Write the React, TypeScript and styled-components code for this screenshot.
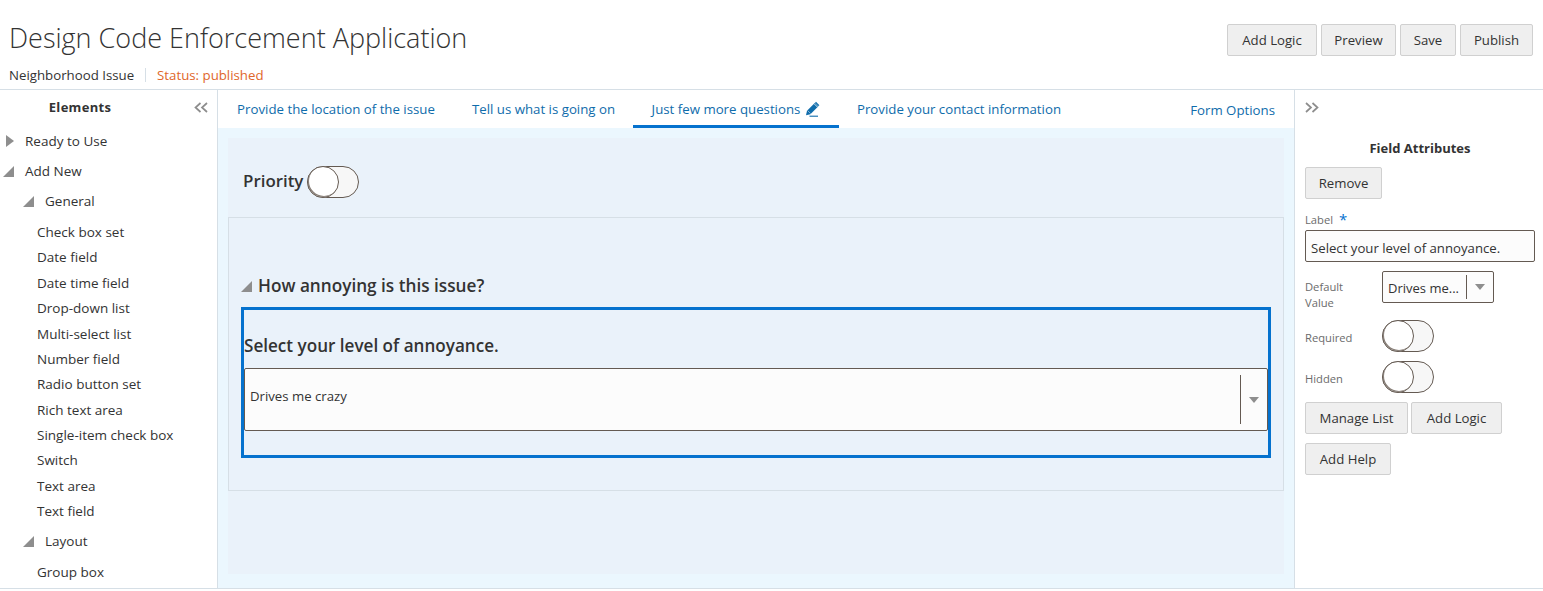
import React from "react";
import styled, { createGlobalStyle } from "styled-components";

const Global = createGlobalStyle`
  html, body { margin: 0; padding: 0; background: #fff; }
  body { font-family: "Open Sans", "Noto Sans", "Liberation Sans", sans-serif; color: #333; overflow: hidden; }
  * { box-sizing: border-box; }
`;

const Page = styled.div`
  width: 1543px;
  height: 591px;
  display: flex;
  flex-direction: column;
  overflow: hidden;
`;

const Header = styled.header`
  height: 90px;
  flex: none;
  display: flex;
  justify-content: space-between;
  border-bottom: 1px solid #d6dfe6;
  padding: 0 10px 0 9px;
`;

const TitleBlock = styled.div`
  display: flex;
  flex-direction: column;
  padding-top: 19px;
`;

const Title = styled.h1`
  margin: 0;
  font-weight: 300;
  font-size: 27px;
  line-height: 38px;
  color: #333;
`;

const Meta = styled.div`
  display: flex;
  align-items: center;
  margin-top: 9px;
  font-size: 13.25px;
  line-height: 18px;
`;

const MetaName = styled.span`
  color: #333;
  padding-right: 11px;
  border-right: 1px solid #d6dfe6;
  line-height: 14px;
`;

const MetaStatus = styled.span`
  color: #e0662a;
  padding-left: 11px;
`;

const HeaderActions = styled.div`
  display: flex;
  gap: 4px;
  padding-top: 24px;
`;

const Btn = styled.button<{ $w: number }>`
  width: ${(p) => p.$w}px;
  height: 32px;
  padding: 0;
  background: #efefef;
  border: 1px solid #d0d0d0;
  border-radius: 2px;
  font-family: inherit;
  font-size: 13.2px;
  color: #333;
`;

const Body = styled.div`
  height: 499px;
  flex: none;
  display: grid;
  grid-template-columns: 218px 1077px 1fr;
  border-bottom: 1px solid #d6dfe6;
`;

const Sidebar = styled.aside`
  border-right: 1px solid #d6dfe6;
  overflow: hidden;
  position: relative;
  font-size: 13.5px;
`;

const SideTitle = styled.div`
  height: 36px;
  display: flex;
  align-items: center;
  justify-content: center;
  padding: 0 57px 3px 0;
  font-size: 13px;
  letter-spacing: 0.3px;
  font-weight: 700;
  color: #333;
`;

const Collapse = styled.span`
  position: absolute;
  right: 9px;
  top: 12px;
  line-height: 0;
`;

const TreeRow = styled.div<{ $indent: number; $h: number }>`
  height: ${(p) => p.$h}px;
  display: flex;
  align-items: center;
  padding-left: ${(p) => p.$indent}px;
  color: #333;
`;

const Twisty = styled.svg`
  flex: none;
  display: block;
`;

const TreeLabel = styled.span<{ $gap: number }>`
  margin-left: ${(p) => p.$gap}px;
`;

const LeafList = styled.div`
  padding-top: 3.4px;
`;

const Leaf = styled.div`
  height: 25.36px;
  display: flex;
  align-items: center;
  padding-left: 37px;
  color: #333;
`;

const Main = styled.main`
  display: flex;
  flex-direction: column;
  background: #ebf7fe;
  border-right: 1px solid #d6dfe6;
`;

const Tabs = styled.nav`
  height: 38px;
  flex: none;
  background: #fff;
  display: flex;
  font-size: 13.25px;
  color: #0f6cab;
`;

const Tab = styled.div<{ $active?: boolean; $w: number }>`
  width: ${(p) => p.$w}px;
  display: flex;
  align-items: center;
  justify-content: center;
  gap: 5px;
  padding-top: 3px;
  border-bottom: 3px solid ${(p) => (p.$active ? "#0572ce" : "transparent")};
`;

const TabSpacer = styled.div`
  flex: 1;
`;

const FormOptions = styled.div`
  display: flex;
  align-items: center;
  padding: 2px 19px 0 0;
`;

const Canvas = styled.div`
  flex: 1;
  margin: 10px 10px 14px 10px;
  background: #eaf2fa;
  display: flex;
  flex-direction: column;
`;

const PriorityRow = styled.div`
  height: 79px;
  flex: none;
  display: flex;
  align-items: center;
  padding: 5px 0 0 15px;
  gap: 4px;
  font-size: 16.9px;
  font-weight: 600;
  color: #333;
`;

const Toggle = styled.span<{ $drop?: number }>`
  position: relative;
  display: block;
  width: 52px;
  height: 32px;
  margin-top: ${(p) => p.$drop ?? 0}px;
  border: 1px solid #645a52;
  border-radius: 16px;
  background: #f7f7f7;
  flex: none;
`;

const Knob = styled.span`
  position: absolute;
  left: -1px;
  top: -1px;
  width: 32px;
  height: 32px;
  border-radius: 50%;
  border: 1px solid #645a52;
  box-shadow: inset 1px -1px 0 #8a817a;
  background: #fff;
`;

const GroupBox = styled.section`
  height: 274px;
  flex: none;
  border: 1px solid #d6dfe6;
  padding: 55px 12px 0 12px;
`;

const GroupHead = styled.div`
  display: flex;
  align-items: center;
  gap: 6px;
  height: 26px;
  font-size: 17.2px;
  font-weight: 600;
  color: #333;
`;

const GroupTitle = styled.span`
  margin-top: -2px;
`;

const Selected = styled.div`
  margin-top: 8px;
  height: 151px;
  border: 3px solid #0572ce;
  display: flex;
  flex-direction: column;
`;

const FieldLabel = styled.div`
  height: 58px;
  flex: none;
  display: flex;
  align-items: flex-end;
  padding: 0 0 11px 0;
  font-size: 17.1px;
  font-weight: 600;
  color: #333;
  line-height: 22px;
`;

const BigSelect = styled.div`
  height: 63px;
  background: #fcfcfc;
  border: 1px solid #645a52;
  border-radius: 2px;
  display: flex;
  align-items: flex-start;
  padding: 6px 0 0 5px;
  font-size: 13.2px;
  color: #333;
`;

const BigValue = styled.span`
  flex: 1;
  padding-top: 6px;
  line-height: 30px;
  height: 36px;
`;

const Divider = styled.span<{ $h: number }>`
  width: 1px;
  height: ${(p) => p.$h}px;
  background: #645a52;
  flex: none;
`;

const CaretBox = styled.span`
  width: 26px;
  height: 50px;
  flex: none;
  display: flex;
  align-items: center;
  justify-content: center;
`;

const Panel = styled.aside`
  padding: 0 8px 0 10px;
  display: flex;
  flex-direction: column;
  font-size: 13px;
  position: relative;
`;

const PanelTop = styled.div`
  height: 46px;
  flex: none;
  padding-top: 12px;
  line-height: 0;
`;

const PanelTitle = styled.div`
  height: 24px;
  flex: none;
  display: flex;
  align-items: center;
  justify-content: center;
  font-size: 13px;
  font-weight: 700;
  margin-bottom: 7px;
`;

const FieldName = styled.div`
  font-size: 11.2px;
  color: #6b6b6b;
  line-height: 16px;
  display: flex;
  gap: 6px;
  margin-top: 13px;
  height: 14px;
`;

const Star = styled.span`
  color: #0572ce;
  font-size: 15px;
  line-height: 14px;
`;

const TextInput = styled.div`
  width: 230px;
  height: 32px;
  margin: 4px 0 9px;
  background: #fcfcfc;
  border: 1px solid #645a52;
  border-radius: 2px;
  display: flex;
  align-items: center;
  padding: 3px 0 0 5px;
  font-size: 13.2px;
  color: #333;
  white-space: nowrap;
`;

const AttrRow = styled.div<{ $h: number }>`
  height: ${(p) => p.$h}px;
  flex: none;
  display: grid;
  grid-template-columns: 77px 1fr;
  align-items: start;
`;

const AttrName = styled.div<{ $pt: number }>`
  font-size: 11.2px;
  color: #6b6b6b;
  line-height: 16px;
  padding-top: ${(p) => p.$pt}px;
`;

const MiniSelect = styled.div`
  width: 112px;
  height: 32px;
  background: #fcfcfc;
  border: 1px solid #645a52;
  border-radius: 2px;
  display: flex;
  align-items: center;
  padding-left: 5px;
  font-size: 13px;
  color: #333;
`;

const MiniValue = styled.span`
  width: 78px;
  padding-top: 2px;
  white-space: nowrap;
`;

const MiniCaret = styled.span`
  flex: 1;
  display: flex;
  justify-content: center;
`;

const BtnRow = styled.div`
  display: flex;
  gap: 3px;
  margin-bottom: 9px;
`;

const Caret = () => (
  <svg width="10" height="6" viewBox="0 0 10 6"><path d="M0 0h10L5 6z" fill="#8e8e8e" /></svg>
);

const Down = () => (
  <Twisty width="11" height="11" viewBox="0 0 11 11"><path d="M11 0v11H0z" fill="#8e8e8e" /></Twisty>
);

const Right = () => (
  <Twisty width="8" height="12" viewBox="0 0 8 12"><path d="M0 0l8 6-8 6z" fill="#8e8e8e" /></Twisty>
);

const Chevrons = ({ flip }: { flip?: boolean }) => (
  <svg width="14" height="11" viewBox="0 0 14 11" style={flip ? { transform: "scaleX(-1)" } : undefined}>
    <path d="M6.5 1L1.5 5.5l5 4.5M13 1L8 5.5l5 4.5" fill="none" stroke="#8d8d8d" strokeWidth="1.7" />
  </svg>
);

const PencilIcon = () => (
  <svg width="15" height="16" viewBox="0 0 15 16">
    <path d="M1 14.2l1-4.4 8-8 3.4 3.4-8 8z" fill="#0f6cab" />
    <path d="M11 0.8l3.4 3.4-0.9 0.9-3.4-3.4z" fill="#0f6cab" />
    <path d="M9.2 2.8l3.2 3.2" stroke="#fff" strokeWidth="0.8" />
    <path d="M2.6 9.6l3 3" stroke="#cfe3f1" strokeWidth="0.6" />
    <path d="M4.5 15.2h8.5" stroke="#0f6cab" strokeWidth="1.1" />
  </svg>
);

const Switch = ({ drop }: { drop?: number }) => (
  <Toggle $drop={drop}>
    <Knob />
  </Toggle>
);

const leaves1 = [
  "Check box set",
  "Date field",
  "Date time field",
  "Drop-down list",
  "Multi-select list",
  "Number field",
  "Radio button set",
  "Rich text area",
  "Single-item check box",
  "Switch",
  "Text area",
  "Text field",
];

export default function App() {
  return (
    <Page>
      <Global />
      <Header>
        <TitleBlock>
          <Title>Design Code Enforcement Application</Title>
          <Meta>
            <MetaName>Neighborhood Issue</MetaName>
            <MetaStatus>Status: published</MetaStatus>
          </Meta>
        </TitleBlock>
        <HeaderActions>
          <Btn $w={90}>Add Logic</Btn>
          <Btn $w={75}>Preview</Btn>
          <Btn $w={56}>Save</Btn>
          <Btn $w={73}>Publish</Btn>
        </HeaderActions>
      </Header>
      <Body>
        <Sidebar>
          <SideTitle>Elements</SideTitle>
          <Collapse>
            <Chevrons />
          </Collapse>
          <TreeRow $indent={6} $h={30}>
            <Right />
            <TreeLabel $gap={11}>Ready to Use</TreeLabel>
          </TreeRow>
          <TreeRow $indent={3} $h={30}>
            <Down />
            <TreeLabel $gap={11}>Add New</TreeLabel>
          </TreeRow>
          <TreeRow $indent={23} $h={30}>
            <Down />
            <TreeLabel $gap={11}>General</TreeLabel>
          </TreeRow>
          <LeafList>
            {leaves1.map((l) => (
              <Leaf key={l}>{l}</Leaf>
            ))}
          </LeafList>
          <TreeRow $indent={23} $h={35.5}>
            <Down />
            <TreeLabel $gap={11}>Layout</TreeLabel>
          </TreeRow>
          <Leaf>Group box</Leaf>
        </Sidebar>
        <Main>
          <Tabs>
            <Tab $w={236}>Provide the location of the issue</Tab>
            <Tab $w={179}>Tell us what is going on</Tab>
            <Tab $active $w={206}>
              Just few more questions
              <PencilIcon />
            </Tab>
            <Tab $w={240}>Provide your contact information</Tab>
            <TabSpacer />
            <FormOptions>Form Options</FormOptions>
          </Tabs>
          <Canvas>
            <PriorityRow>
              Priority
              <Switch drop={4} />
            </PriorityRow>
            <GroupBox>
              <GroupHead>
                <Down />
                <GroupTitle>How annoying is this issue?</GroupTitle>
              </GroupHead>
              <Selected>
                <FieldLabel>Select your level of annoyance.</FieldLabel>
                <BigSelect>
                  <BigValue>Drives me crazy</BigValue>
                  <Divider $h={49} />
                  <CaretBox>
                    <Caret />
                  </CaretBox>
                </BigSelect>
              </Selected>
            </GroupBox>
          </Canvas>
        </Main>
        <Panel>
          <PanelTop>
            <Chevrons flip />
          </PanelTop>
          <PanelTitle>Field Attributes</PanelTitle>
          <div>
            <Btn $w={77}>Remove</Btn>
          </div>
          <FieldName>
            Label <Star>*</Star>
          </FieldName>
          <TextInput>Select your level of annoyance.</TextInput>
          <AttrRow $h={49}>
            <AttrName $pt={8}>
              Default
              <br />
              Value
            </AttrName>
            <MiniSelect>
              <MiniValue>Drives me...</MiniValue>
              <Divider $h={24} />
              <MiniCaret>
                <Caret />
              </MiniCaret>
            </MiniSelect>
          </AttrRow>
          <AttrRow $h={41}>
            <AttrName $pt={10}>Required</AttrName>
            <Switch />
          </AttrRow>
          <AttrRow $h={41}>
            <AttrName $pt={10}>Hidden</AttrName>
            <Switch />
          </AttrRow>
          <BtnRow>
            <Btn $w={103}>Manage List</Btn>
            <Btn $w={91}>Add Logic</Btn>
          </BtnRow>
          <BtnRow>
            <Btn $w={86}>Add Help</Btn>
          </BtnRow>
        </Panel>
      </Body>
    </Page>
  );
}
